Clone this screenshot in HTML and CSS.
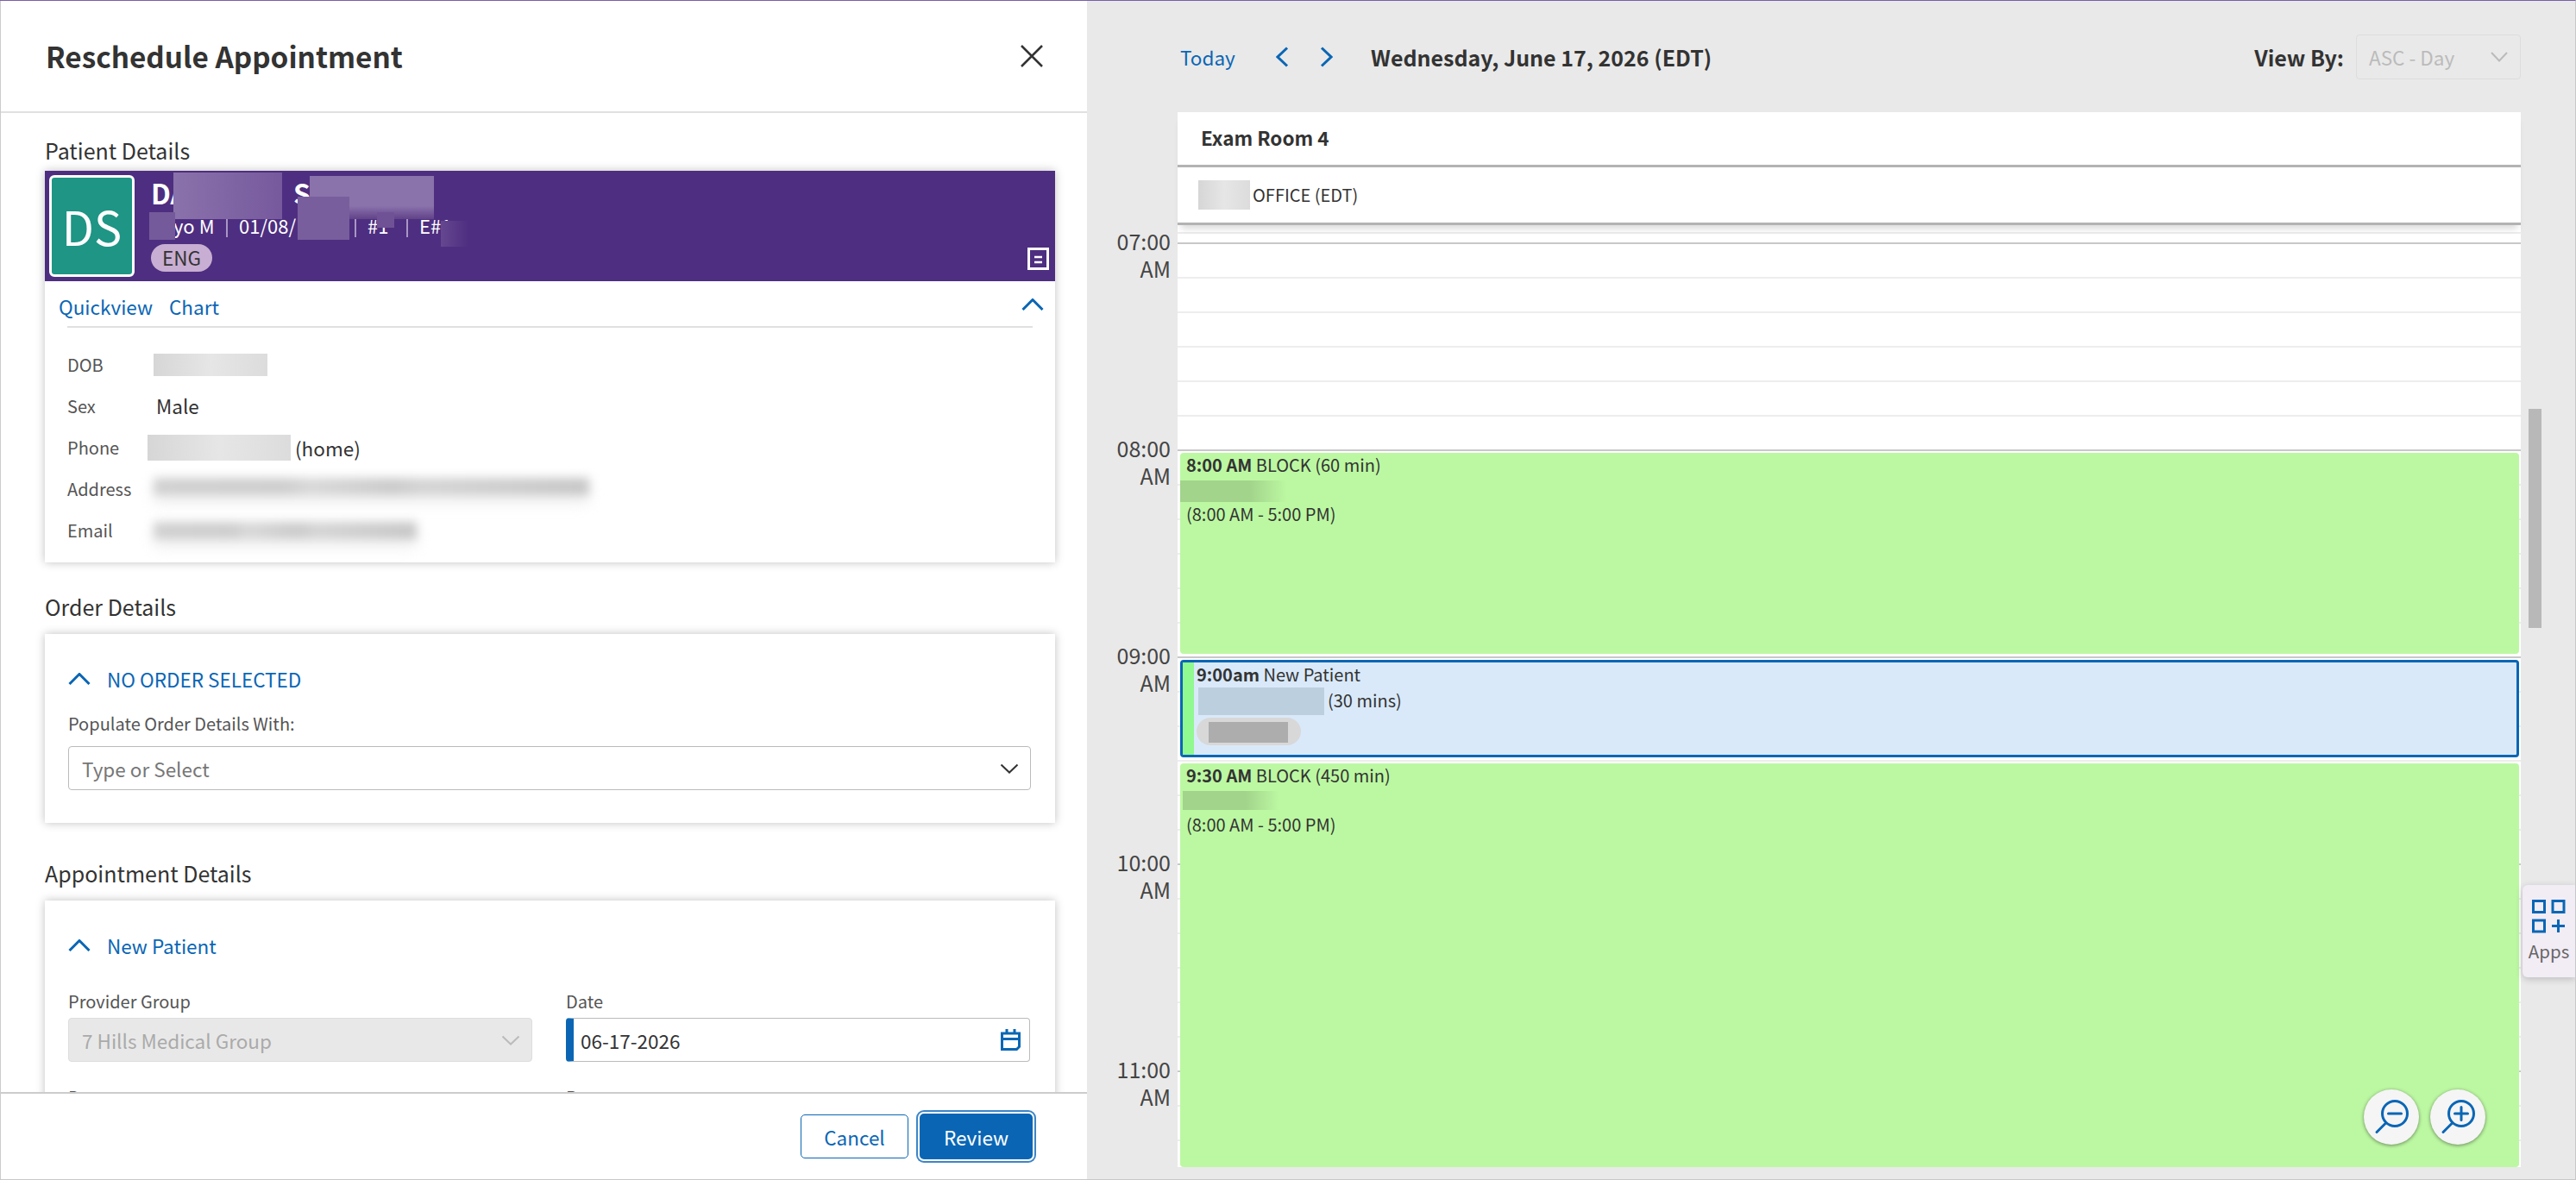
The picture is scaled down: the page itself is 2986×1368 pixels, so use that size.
FILE: index.html
```html
<!DOCTYPE html>
<html lang="en">
<head>
    <meta charset="UTF-8">
    <meta name="viewport" content="width=device-width, initial-scale=1.0">
    <title>Reschedule Appointment</title>
    <link rel="stylesheet" href="styles.css">
</head>
<body>
    <div class="app">
        <section class="drawer">
            <header class="drawer-header">
                <h1>Reschedule Appointment</h1>
                <svg class="icon-close" viewBox="0 0 26 26"><path d="M1 1l24 24M25 1L1 25"/></svg>
            </header>

            <div class="drawer-body">
                <h2 class="section-title">Patient Details</h2>
                <div class="card patient-card">
                    <div class="banner">
                        <div class="avatar">DS</div>
                        <div class="banner-info">
                            <div class="patient-name"><span>DA</span><span class="name-last">S</span></div>
                            <div class="patient-meta">
                                <span class="meta-age">yo M</span>
                                <span class="meta-dob">01/08/</span>
                                <span class="meta-id">#1</span>
                                <span class="meta-enc">E#1</span>
                            </div>
                            <span class="lang-pill">ENG</span>
                        </div>
                        <svg class="icon-note" viewBox="0 0 25 26"><path class="note-frame" d="M1.5 1.5h22v23h-22z"/><path class="note-line" d="M8 11h9M8 17h9"/></svg>
                        <i class="smudge smudge-first"></i>
                        <i class="smudge smudge-last"></i>
                        <i class="smudge smudge-dob"></i>
                        <i class="smudge smudge-age"></i>
                        <i class="smudge smudge-id"></i>
                        <i class="smudge smudge-enc"></i>
                    </div>
                    <div class="patient-links">
                        <a>Quickview</a>
                        <a>Chart</a>
                        <svg class="chevron chevron-patient" viewBox="0 0 26 14"><path d="M1.500 13L13 1.500 24.500 13"/></svg>
                    </div>
                    <dl class="patient-rows">
                        <div class="patient-row"><dt>DOB</dt><dd><i class="blur-box blur-dob"></i></dd></div>
                        <div class="patient-row"><dt>Sex</dt><dd class="value-text">Male</dd></div>
                        <div class="patient-row"><dt>Phone</dt><dd class="phone-value"><i class="blur-box blur-phone"></i><span>(home)</span></dd></div>
                        <div class="patient-row"><dt>Address</dt><dd><i class="blur-text blur-address"></i></dd></div>
                        <div class="patient-row"><dt>Email</dt><dd><i class="blur-text blur-email"></i></dd></div>
                    </dl>
                </div>

                <h2 class="section-title title-order">Order Details</h2>
                <div class="card form-card order-card">
                    <div class="collapse-head">
                        <svg class="chevron" viewBox="0 0 26 14"><path d="M1.500 13L13 1.500 24.500 13"/></svg>
                        <span>NO ORDER SELECTED</span>
                    </div>
                    <label class="field-label label-order">Populate Order Details With:</label>
                    <div class="select-box">
                        <span class="placeholder">Type or Select</span>
                        <svg class="select-arrow" viewBox="0 0 22 12"><path d="M1.500 1.500L11 10.500l9.500-9"/></svg>
                    </div>
                </div>

                <h2 class="section-title title-appt">Appointment Details</h2>
                <div class="card form-card appt-card">
                    <div class="collapse-head">
                        <svg class="chevron" viewBox="0 0 26 14"><path d="M1.500 13L13 1.500 24.500 13"/></svg>
                        <span>New Patient</span>
                    </div>
                    <div class="field-grid">
                        <div>
                            <label class="field-label">Provider Group</label>
                            <div class="select-box is-disabled">
                                <span>7 Hills Medical Group</span>
                                <svg class="select-arrow" viewBox="0 0 22 12"><path d="M1.500 1.500L11 10.500l9.500-9"/></svg>
                            </div>
                        </div>
                        <div>
                            <label class="field-label">Date</label>
                            <div class="select-box date-box">
                                <span>06-17-2026</span>
                                <svg class="icon-calendar" viewBox="0 0 23 25"><path d="M1.500 5h20v15.500l-3 3h-17zM1.500 11.500h20"/><path d="M7 0v5M16 0v5"/></svg>
                            </div>
                        </div>
                        <div><label class="field-label">Department</label></div>
                        <div><label class="field-label">Resource</label></div>
                    </div>
                </div>
            </div>

            <footer class="drawer-footer">
                <button class="btn btn-outline">Cancel</button>
                <button class="btn btn-primary">Review</button>
            </footer>
        </section>

        <section class="schedule">
            <div class="toolbar">
                <a class="today-link">Today</a>
                <svg class="nav-arrow nav-prev" viewBox="0 0 15 24"><path d="M13 1.500L2 12l11 10.500"/></svg>
                <svg class="nav-arrow nav-next" viewBox="0 0 15 24"><path d="M2 1.500L13 12 2 22.500"/></svg>
                <span class="toolbar-date">Wednesday, June 17, 2026 (EDT)</span>
                <span class="view-label">View By:</span>
                <div class="view-select">
                    <span>ASC - Day</span>
                    <svg viewBox="0 0 20 12"><path d="M1 1l9 9.500L19 1"/></svg>
                </div>
            </div>

            <div class="calendar">
                <div class="cal-head">
                    <div class="room-name">Exam Room 4</div>
                    <div class="room-location"><i class="blur-box blur-office"></i><span>OFFICE (EDT)</span></div>
                </div>
                <div class="cal-body">
                    <div class="time-col">
                        <div class="hour">07:00<br>AM</div>
                        <div class="hour">08:00<br>AM</div>
                        <div class="hour">09:00<br>AM</div>
                        <div class="hour">10:00<br>AM</div>
                        <div class="hour">11:00<br>AM</div>
                    </div>
                    <div class="slots">
                        <div class="event block block-first">
                            <div><b>8:00 AM</b> BLOCK (60 min)</div>
                            <i class="blur-green"></i>
                            <div>(8:00 AM - 5:00 PM)</div>
                        </div>
                        <div class="event appt">
                            <div class="appt-bar"></div>
                            <div class="appt-text">
                                <div><b>9:00am</b> New Patient</div>
                                <div class="appt-line"><i class="blur-blue"></i><span>(30 mins)</span></div>
                                <div class="appt-pill"><i></i></div>
                            </div>
                        </div>
                        <div class="event block block-second">
                            <div><b>9:30 AM</b> BLOCK (450 min)</div>
                            <i class="blur-green blur-green-short"></i>
                            <div>(8:00 AM - 5:00 PM)</div>
                        </div>
                    </div>
                    <div class="scrollbar"><div class="scroll-thumb"></div></div>
                </div>
            </div>

            <div class="zoom-controls">
                <button class="zoom-btn">
                    <svg viewBox="0 0 40 40"><circle cx="24" cy="16" r="14.500"/><path d="M13.500 27L3 37.500M16.500 16h15"/></svg>
                </button>
                <button class="zoom-btn">
                    <svg viewBox="0 0 40 40"><circle cx="24" cy="16" r="14.500"/><path d="M13.500 27L3 37.500M16.500 16h15M24 8.500v15"/></svg>
                </button>
            </div>

            <div class="apps-tab">
                <svg viewBox="0 0 40 39"><path d="M1.500 1.500h13v13h-13zM24 1.500h13v13H24zM1.500 24h13v13h-13zM30.500 23v15M23 30.500h15"/></svg>
                <span>Apps</span>
            </div>
        </section>
    </div>
</body>
</html>
```
FILE: styles.css
```css
* {
    box-sizing: border-box;
}

body {
    margin: 0;
    font-family: "Noto Sans CJK SC", "Open Sans", sans-serif;
    font-size: 22.500px;
    line-height: 28px;
    color: #333;
    background-color: #e9e9e9;
}

a {
    color: #0a66b5;
}

.app {
    display: flex;
    width: 2986px;
    height: 1368px;
    overflow: hidden;
    border-top: 1px solid #7a5fa8;
    border-bottom: 1px solid #c8c8c8;
    border-right: 1px solid #c8c8c8;
}

/* left drawer */
.drawer {
    display: flex;
    flex-direction: column;
    flex: 0 0 1260px;
    background-color: white;
    border-left: 1px solid #ccc;
}

.drawer-header {
    display: flex;
    align-items: center;
    justify-content: space-between;
    flex: 0 0 130px;
    padding: 0 51px 0 52px;
    border-bottom: 2px solid #e0e0e0;
}

.drawer-header h1 {
    margin: 0;
    font-size: 33.300px;
    font-weight: 700;
    line-height: 44px;
}

.icon-close {
    width: 26px;
    height: 26px;
    fill: none;
    stroke: #333;
    stroke-width: 2.500;
}

.drawer-body {
    flex: 1;
    min-height: 0;
    overflow: hidden;
    padding: 25px 37px 0 51px;
}

.section-title {
    margin: 0;
    font-size: 25px;
    font-weight: 400;
    line-height: 36px;
}

.title-order {
    margin-top: 33px;
}

.title-appt {
    margin-top: 40px;
}

.card {
    background-color: white;
    box-shadow: 0 0 10px rgba(0, 0, 0, 0.25);
}

/* patient card */
.patient-card {
    height: 454px;
    margin-top: 6px;
}

.banner {
    position: relative;
    display: flex;
    height: 128px;
    padding: 5px 0 0 5px;
    background-color: #4e2e80;
    color: white;
}

.avatar {
    display: flex;
    align-items: center;
    justify-content: center;
    width: 99px;
    height: 118px;
    font-size: 54px;
    background-color: #1e9585;
    border: 3px solid white;
    border-radius: 6px;
}

.banner-info {
    padding: 2px 0 0 19px;
}

.patient-name {
    height: 40px;
    font-size: 32px;
    font-weight: 700;
    line-height: 36px;
}

.name-last {
    margin-left: 122px;
}

.patient-meta {
    position: relative;
    height: 32px;
    font-size: 22px;
    line-height: 32px;
}

.patient-meta span {
    position: absolute;
    top: 0;
}

.meta-age {
    left: 26px;
}

.meta-dob {
    left: 102px;
}

.meta-id {
    left: 251px;
}

.meta-enc {
    left: 311px;
}

.meta-dob::before,
.meta-id::before,
.meta-enc::before {
    content: "";
    position: absolute;
    top: 8px;
    left: -15px;
    width: 2px;
    height: 22px;
    background-color: #a897c4;
}

.lang-pill {
    display: inline-block;
    width: 71px;
    height: 32px;
    margin-top: 6px;
    font-size: 22.500px;
    line-height: 31px;
    text-align: center;
    color: #333;
    background-color: #c8aed2;
    border-radius: 16px;
}

.icon-note {
    position: absolute;
    right: 7px;
    top: 89px;
    width: 25px;
    height: 26px;
    fill: none;
    stroke: white;
}

.note-frame {
    stroke-width: 3;
}

.note-line {
    stroke-width: 2.500;
}

.smudge {
    position: absolute;
    background-color: #82689f;
}

.smudge-first {
    left: 149px;
    top: 2px;
    width: 126px;
    height: 54px;
    background-image: linear-gradient(90deg, #8a72ab, #76599d);
}

.smudge-last {
    left: 307px;
    top: 6px;
    width: 144px;
    height: 50px;
    background-image: linear-gradient(180deg, #8a72ab 70%, #614289);
}

.smudge-dob {
    left: 293px;
    top: 30px;
    width: 60px;
    height: 50px;
    background-color: #785e9d;
}

.smudge-age {
    left: 121px;
    top: 48px;
    width: 30px;
    height: 32px;
    background-color: #755a9b;
}

.smudge-id {
    left: 385px;
    top: 48px;
    width: 20px;
    height: 18px;
    background-color: #6f5296;
}

.smudge-enc {
    left: 459px;
    top: 58px;
    width: 32px;
    height: 30px;
    background-image: linear-gradient(90deg, #654790, #4e2e80);
}

.patient-links {
    position: relative;
    display: flex;
    gap: 19px;
    height: 54px;
    margin: 0 26px;
    padding-top: 15px;
    border-bottom: 2px solid #e0e0e0;
}

.patient-links a:first-child {
    margin-left: -10px;
}

.chevron {
    width: 26px;
    height: 14px;
    fill: none;
    stroke: #0a66b5;
    stroke-width: 3;
}

.chevron-patient {
    position: absolute;
    right: -13px;
    top: 20px;
}

.patient-rows {
    margin: 19px 26px 0;
}

.patient-row {
    display: flex;
    align-items: center;
    height: 48px;
    font-size: 20px;
    color: #555;
}

.patient-row dt {
    width: 100px;
}

.patient-row dd {
    margin: 0;
}

.patient-row .value-text {
    margin-left: 3px;
    margin-top: -2px;
    font-size: 22.500px;
    color: #333;
}

.patient-row .phone-value {
    display: flex;
    align-items: center;
    gap: 5px;
    margin-left: -7px;
    font-size: 22.500px;
    color: #333;
}

.blur-box {
    display: block;
    background-color: #dedede;
    background-image: linear-gradient(90deg, #d6d6d6, #e6e6e6 50%, #dcdcdc);
}

.blur-dob {
    width: 132px;
    height: 26px;
}

.blur-phone {
    width: 166px;
    height: 30px;
}

.blur-office {
    width: 60px;
    height: 34px;
}

/* blurred text lines, the halo is the paler area round them */
.blur-text {
    display: block;
    height: 20px;
    margin-left: 0;
    background-image: linear-gradient(90deg, #d0d0d0 0, #cdcdcd 30%, #d8d8d8 36%, #cacaca 55%, #d4d4d4 62%, #c6c6c6 100%);
    box-shadow: 0 10px 14px #f0f0f0;
    filter: blur(6px);
}

.blur-address {
    width: 505px;
    transform: translateY(-3px);
}

.blur-email {
    width: 305px;
}

/* order and appointment cards */
.form-card {
    margin-top: 14px;
    padding: 38px 28px 0 27px;
}

.order-card {
    height: 219px;
}

.appt-card {
    height: 300px;
}

.collapse-head {
    display: flex;
    align-items: center;
    gap: 19px;
    height: 28px;
    color: #0a66b5;
}

.field-label {
    display: block;
    font-size: 20px;
    line-height: 28px;
    color: #555;
}

.label-order {
    margin: 24px 0 12px;
}

.select-box {
    display: flex;
    align-items: center;
    justify-content: space-between;
    height: 51px;
    padding: 0 13px 0 15px;
    background-color: white;
    border: 1px solid #bbb;
    border-radius: 4px;
}

.placeholder {
    color: #777;
}

.select-arrow {
    width: 22px;
    height: 12px;
    fill: none;
    stroke: #333;
    stroke-width: 2;
}

.is-disabled {
    color: #aaa;
    background-color: #e8e8e8;
    border-color: #ddd;
}

.is-disabled .select-arrow {
    stroke: #bbb;
}

.date-box {
    padding-left: 8px;
    border-left: 9px solid #0a66b5;
}

.icon-calendar {
    width: 23px;
    height: 25px;
    margin-right: -3px;
    fill: none;
    stroke: #0a66b5;
    stroke-width: 3;
}

.field-grid {
    display: grid;
    grid-template-columns: 538px 538px;
    column-gap: 39px;
    row-gap: 27px;
    margin-top: 37px;
}

.field-grid .field-label {
    margin-bottom: 5px;
}

/* footer */
.drawer-footer {
    position: relative;
    display: flex;
    justify-content: flex-end;
    align-items: center;
    gap: 13px;
    flex: 0 0 101px;
    padding-right: 63px;
    background-color: white;
    border-top: 2px solid #ccc;
}

.btn {
    height: 51px;
    font-family: inherit;
    font-size: 22.500px;
    border-radius: 5px;
}

.btn-outline {
    width: 125px;
    color: #0a66b5;
    background-color: white;
    border: 1.500px solid #0a66b5;
}

.btn-primary {
    width: 131px;
    height: 53px;
    color: white;
    background-color: #0a66b5;
    border: 2px solid #0a66b5;
    box-shadow: 0 0 0 2px white, 0 0 0 4px #3d85c6;
}

/* right schedule panel */
.schedule {
    position: relative;
    flex: 1;
    display: flex;
    flex-direction: column;
    min-width: 0;
}

.toolbar {
    display: flex;
    align-items: center;
    flex: 0 0 129px;
    padding: 0 63px 0 108px;
}

.today-link {
    width: 111px;
}

.nav-arrow {
    width: 15px;
    height: 24px;
    fill: none;
    stroke: #0a66b5;
    stroke-width: 3;
}

.nav-next {
    margin-left: 36px;
}

.toolbar-date {
    margin-left: 44px;
    font-size: 25px;
    font-weight: 700;
}

.view-label {
    margin-left: auto;
    font-size: 25px;
    font-weight: 700;
}

.view-select {
    display: flex;
    align-items: center;
    justify-content: space-between;
    width: 191px;
    height: 52px;
    margin-left: 14px;
    padding: 0 14px;
    color: #bbb;
    border: 1px solid #ddd;
    border-radius: 4px;
}

.view-select svg {
    width: 20px;
    height: 12px;
    fill: none;
    stroke: #bbb;
    stroke-width: 2;
}

.calendar {
    flex: 1;
    min-height: 0;
    display: flex;
    flex-direction: column;
}

.cal-head {
    position: relative;
    z-index: 1;
    width: 1557px;
    margin-left: 105px;
    background-color: white;
    box-shadow: 0 8px 8px -4px rgba(0, 0, 0, 0.15);
}

.room-name {
    height: 64px;
    padding: 15px 27px 0;
    font-weight: 700;
    border-bottom: 3px solid #b3b3b3;
}

.room-location {
    display: flex;
    align-items: center;
    gap: 3px;
    height: 67px;
    padding-left: 24px;
    font-size: 20px;
    border-bottom: 3px solid #b3b3b3;
}

.cal-body {
    display: flex;
    height: 1092px;
}

.time-col {
    flex: 0 0 105px;
    overflow: hidden;
    padding: 2px 8px 0 0;
    font-size: 25px;
    line-height: 32px;
    text-align: right;
    color: #444;
}

.hour {
    height: 240px;
}

.slots {
    position: relative;
    flex: 0 0 1557px;
    overflow: hidden;
    background-color: white;
    background-image:
        repeating-linear-gradient(180deg, #c8c8c8 0, #c8c8c8 2px, transparent 2px, transparent 240px),
        repeating-linear-gradient(180deg, #ededed 0, #ededed 2px, transparent 2px, transparent 40px);
    background-position: 0 20px;
}

.event {
    position: absolute;
    left: 3px;
    right: 2px;
    font-size: 20px;
    line-height: 28.500px;
    border-radius: 4px;
}

.event b {
    font-weight: 700;
}

.block {
    padding-left: 7px;
    background-color: #bcf8a2;
}

.block-first {
    top: 264px;
    height: 233px;
}

.block-second {
    top: 624px;
    bottom: 0;
}

.blur-green {
    display: block;
    width: 124px;
    height: 25px;
    margin: 3px 0 0 -7px;
    background-image: linear-gradient(90deg, #a2d48b 65%, #bcf8a2);
}

.blur-green-short {
    width: 112px;
    height: 22px;
    margin: 3px 0 3px -4px;
}

.appt {
    top: 504px;
    height: 113px;
    display: flex;
    background-color: #d9e9f9;
    border: 3px solid #0a66b5;
}

.appt-bar {
    flex: 0 0 13px;
    background-color: #90f990;
}

.appt-text {
    padding-left: 3px;
}

.appt-line {
    display: flex;
    align-items: center;
    gap: 4px;
    height: 32px;
    padding-left: 2px;
}

.blur-blue {
    display: block;
    width: 146px;
    height: 32px;
    background-color: #bccfdf;
}

.appt-pill {
    width: 121px;
    height: 32px;
    margin-top: 3px;
    padding: 5px 15px 0 14px;
    background-color: #d8d8d8;
    border-radius: 16px;
}

.appt-pill i {
    display: block;
    height: 24px;
    background-color: #adadad;
}

.scrollbar {
    flex: 0 0 15px;
    margin-left: 9px;
    padding-top: 213px;
}

.scroll-thumb {
    height: 254px;
    background-color: #b7b8b7;
}

/* floating controls */
.zoom-controls {
    position: absolute;
    right: 104px;
    top: 1262px;
    display: flex;
    gap: 13px;
}

.zoom-btn {
    display: flex;
    align-items: center;
    justify-content: center;
    width: 64px;
    height: 64px;
    padding: 0;
    background-color: #f5f5f5;
    border: none;
    border-radius: 50%;
    box-shadow: 0 1px 4px rgba(0, 0, 0, 0.45);
}

.zoom-btn svg {
    width: 40px;
    height: 40px;
    fill: none;
    stroke: #0a66b5;
    stroke-width: 3;
    stroke-linecap: round;
}

.apps-tab {
    position: absolute;
    right: 0;
    top: 1025px;
    display: flex;
    flex-direction: column;
    align-items: center;
    width: 61px;
    height: 107px;
    padding-top: 17px;
    font-size: 20.500px;
    color: #666;
    background-color: #f2ecf5;
    border-radius: 6px 0 0 6px;
    box-shadow: 0 2px 8px rgba(0, 0, 0, 0.2);
}

.apps-tab svg {
    width: 40px;
    height: 39px;
    fill: none;
    stroke: #0a66b5;
    stroke-width: 3;
}

.apps-tab span {
    margin-top: 6px;
}
```
